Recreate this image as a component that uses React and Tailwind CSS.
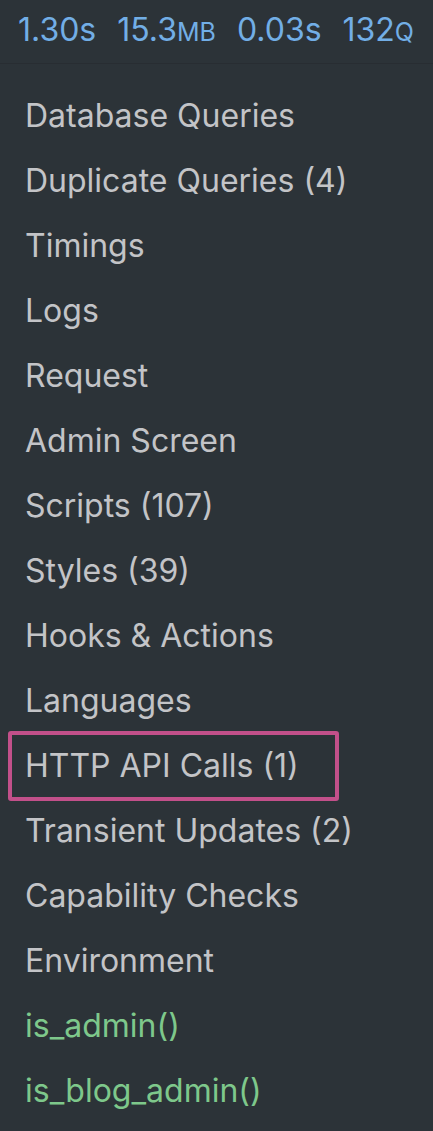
import React from "react";

const panels = [
  { label: "Database Queries" },
  { label: "Duplicate Queries (4)" },
  { label: "Timings" },
  { label: "Logs" },
  { label: "Request" },
  { label: "Admin Screen" },
  { label: "Scripts (107)" },
  { label: "Styles (39)" },
  { label: "Hooks & Actions" },
  { label: "Languages" },
  { label: "HTTP API Calls (1)", active: true },
  { label: "Transient Updates (2)" },
  { label: "Capability Checks" },
  { label: "Environment" },
  { label: "is_admin()", cond: true },
  { label: "is_blog_admin()", cond: true },
];

const Stat = ({ value, unit, small }) => (
  <span>
    {value}
    {small ? <span className="text-[25px]">{unit}</span> : unit}
  </span>
);

export default function App() {
  return (
    <div
      className="w-[433px] h-[1131px] bg-[#2c3338] overflow-hidden"
      style={{ fontFamily: "Inter, 'Noto Sans', sans-serif" }}
    >
      {/* Top stats bar */}
      <div className="h-[64px] flex items-center gap-[21px] pl-[18px] pb-[4px] text-[32px] leading-none text-[#72aee6] border-b border-[#282d32]">
        <Stat value="1.30" unit="s" />
        <Stat value="15.3" unit="MB" small />
        <Stat value="0.03" unit="s" />
        <Stat value="132" unit="Q" small />
      </div>

      {/* Panel menu */}
      <ul className="pt-[19px]">
        {panels.map((p) => (
          <li key={p.label} className="h-[65px] flex items-center pl-[8px]">
            <div
              className={
                "h-[70px] flex items-center pl-[13px] pr-[36px] text-[32px] rounded-[3px] border-[4px] " +
                (p.active ? "border-[#c2508a] " : "border-transparent ") +
                (p.cond ? "text-[#7ec88b]" : "text-[#c3c4c7]")
              }
            >
              {p.label}
            </div>
          </li>
        ))}
      </ul>
    </div>
  );
}
